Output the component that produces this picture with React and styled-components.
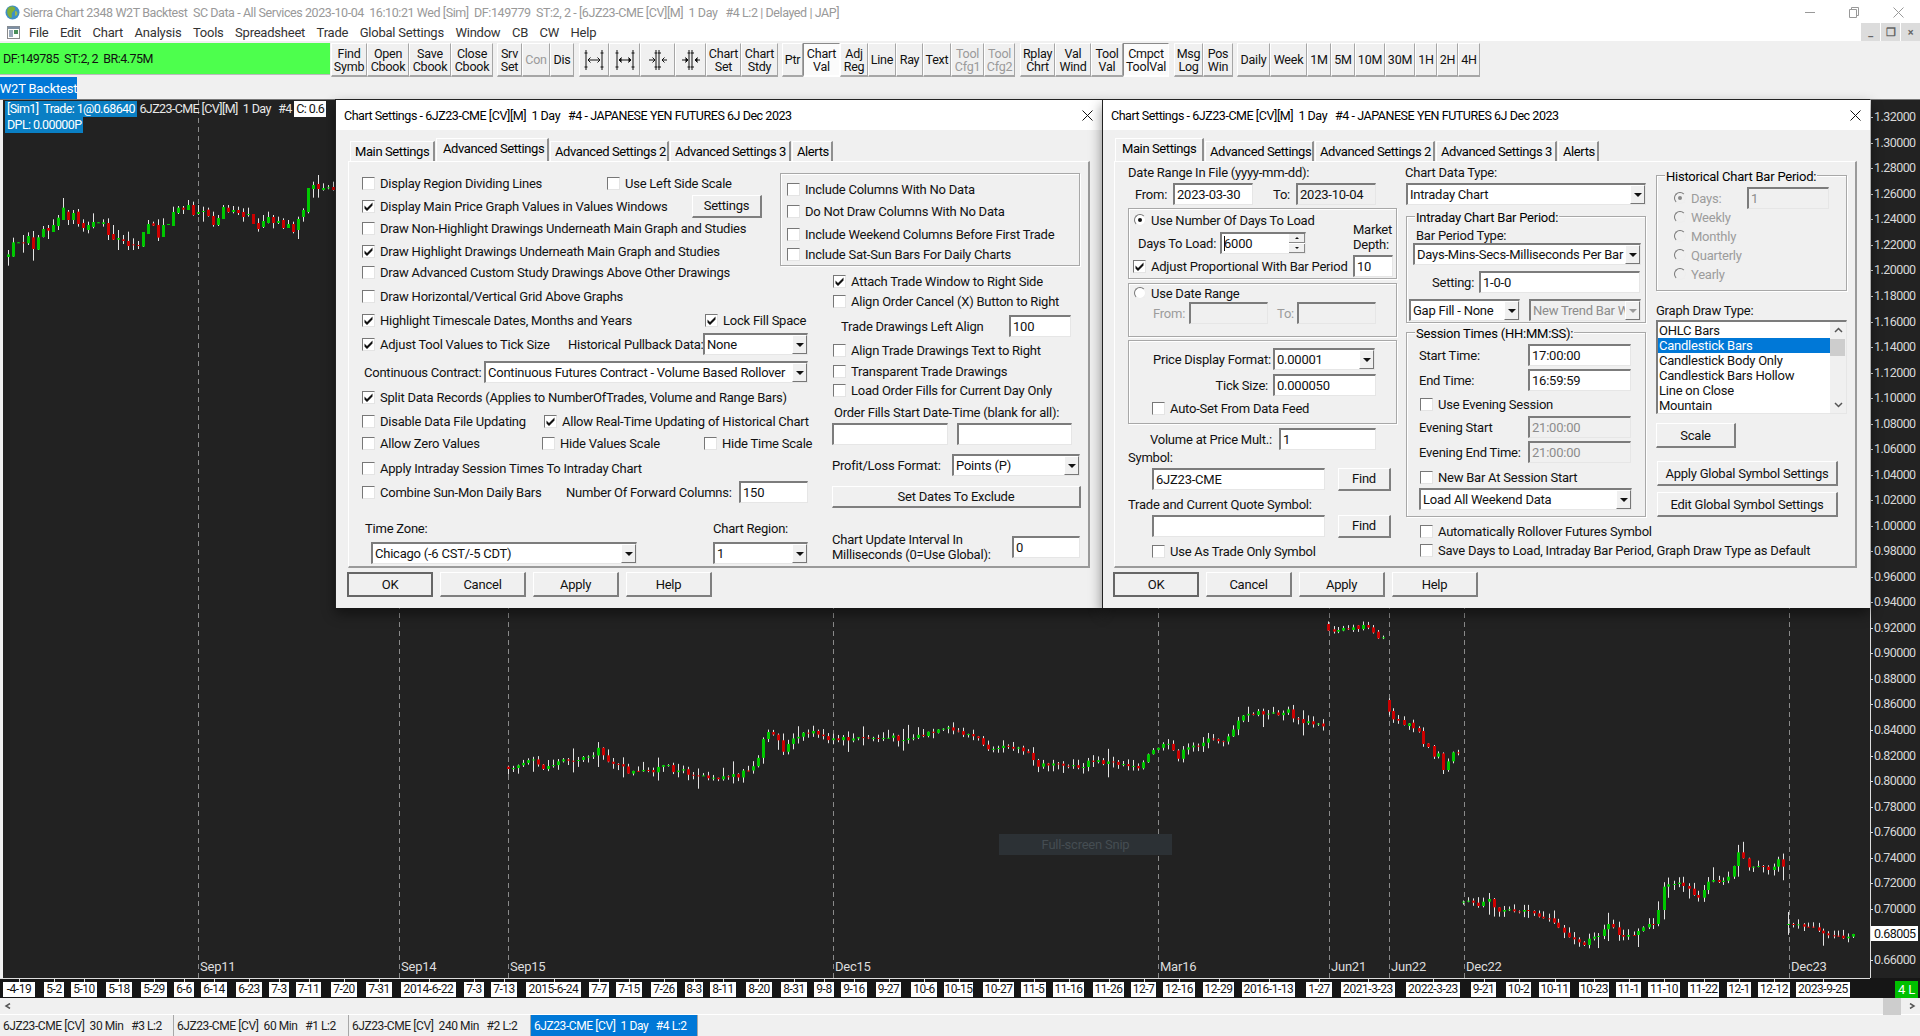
import React from 'react';
import styled, { createGlobalStyle } from 'styled-components';

const FONT = `Roboto, "Liberation Sans", sans-serif`;

const GlobalStyle = createGlobalStyle`
  html, body { margin: 0; padding: 0; background: #f0f0f0; }
  body { font-family: ${FONT}; font-size: 13px; letter-spacing: -0.23px; color: #000; overflow: hidden; }
  * { box-sizing: border-box; }
`;

/* ---------- shell ---------- */

const Shell = styled.div`
  width: 1920px;
  height: 1036px;
  display: flex;
  flex-direction: column;
  overflow: hidden;
  background: #f0f0f0;
`;

const TitleBar = styled.div`
  height: 24px;
  background: #fff;
  display: flex;
  align-items: center;
  padding-left: 5px;
  color: #999;
  white-space: pre;
`;

const TitleText = styled.span`
  margin-left: 3px;
  flex: 1;
  font-size: 12.5px;
  letter-spacing: -0.42px;
`;

const WinBtn = styled.span`
  width: 44px;
  display: flex;
  justify-content: center;
  align-items: center;
`;

const MenuBar = styled.div`
  height: 17px;
  background: #fff;
  display: flex;
  align-items: center;
  padding-left: 7px;
  color: #333;
`;

const MenuItem = styled.span`
  margin-right: 11.5px;
`;

const MdiButtons = styled.div`
  margin-left: auto;
  display: flex;
  gap: 1px;
  align-self: flex-end;
  height: 18px;
`;

const MdiBtn = styled.span`
  width: 19px;
  background: #dcdcdc;
  color: #666;
  font-size: 11px;
  font-weight: 700;
  display: flex;
  align-items: center;
  justify-content: center;
`;

const ToolBar = styled.div`
  height: 36px;
  padding-top: 2px;
  display: flex;
`;

const StatusBox = styled.div`
  width: 330px;
  height: 32px;
  background: #4dff4d;
  display: flex;
  align-items: center;
  padding-left: 3px;
  white-space: pre;
  color: #111;
  font-size: 12.5px;
  letter-spacing: -0.5px;
  border-bottom: 1px solid #bbb;
`;

const TbGroup = styled.div`
  display: flex;
  margin-left: ${(p) => p.$ml}px;
`;

const TbBtn = styled.div`
  width: ${(p) => p.$w}px;
  height: 34px;
  display: flex;
  align-items: center;
  justify-content: center;
  text-align: center;
  line-height: 13px;
  font-size: 12.5px;
  white-space: pre;
  color: ${(p) => (p.$dis ? '#9a9a9a' : '#111')};
  background: ${(p) => (p.$pressed ? '#fbfbfb' : '#f0f0f0')};
  border-top: ${(p) => (p.$pressed ? '1px solid #8a8a8a' : '1px solid #fff')};
  border-left: ${(p) => (p.$pressed ? '1px solid #8a8a8a' : '1px solid #fff')};
  border-right: 1px solid ${(p) => (p.$pressed ? '#fff' : '#a6a6a6')};
  border-bottom: 2px solid ${(p) => (p.$pressed ? '#fff' : '#a6a6a6')};
`;

const TabRow = styled.div`
  height: 23px;
  display: flex;
  border-bottom: 1px solid #777;
`;

const WindowTab = styled.div`
  width: 77px;
  background: #0078d7;
  color: #fff;
  display: flex;
  align-items: center;
  justify-content: center;
  white-space: nowrap;
`;

/* ---------- chart ---------- */

const Workspace = styled.div`
  position: relative;
  height: 898px;
  background: #222;
  border-left: 3px solid #f0f0f0;
`;

const ChartSvg = styled.svg`
  display: block;
  margin-left: -3px;
`;

const TimeScale = styled.div`
  position: relative;
  height: 20px;
  margin-left: -3px;
  background: #161616;
`;

const TimeLabel = styled.span`
  position: absolute;
  top: 4px;
  height: 15px;
  background: #fff;
  color: #111;
  font-size: 12px;
  letter-spacing: -0.45px;
  line-height: 15px;
  text-align: center;
  white-space: nowrap;
`;

const TimeTick = styled.span`
  position: absolute;
  top: 0;
  width: 1px;
  height: 4px;
  background: #ddd;
`;

const TimeBadge = styled.span`
  position: absolute;
  left: 1895px;
  top: 3px;
  width: 23px;
  height: 17px;
  background: #00c000;
  color: #fff;
  text-align: center;
  line-height: 17px;
`;

const PriceLabel = styled.span`
  position: absolute;
  left: 1871px;
  font-size: 12.5px;
  letter-spacing: -0.55px;
  line-height: 15px;
  height: 15px;
  padding: 0 2px 0 3px;
  background: ${(p) => (p.$now ? '#fff' : 'transparent')};
  color: ${(p) => (p.$now ? '#111' : '#d8d8d8')};
`;

const DateLabel = styled.span`
  position: absolute;
  top: 859px;
  color: #ddd;
`;

const ChartHeader = styled.div`
  position: absolute;
  left: 2px;
  top: 1px;
  color: #e8e8e8;
  font-size: 12.5px;
  letter-spacing: -0.6px;
  line-height: 16px;
`;

const HeaderRow = styled.div`
  display: flex;
  white-space: pre;
`;

const Tag = styled.span`
  background: ${(p) => p.$bg};
  color: ${(p) => p.$fg};
  padding: 0 2px;
`;

const Snip = styled.div`
  position: absolute;
  left: 996px;
  top: 734px;
  width: 173px;
  height: 21px;
  background: #2c3135;
  color: #454d52;
  text-align: center;
  line-height: 21px;
`;

/* ---------- dialogs ---------- */

const Dialog = styled.div`
  position: absolute;
  top: -1px;
  left: ${(p) => p.$left}px;
  width: ${(p) => p.$w}px;
  height: 509px;
  background: #f0f0f0;
  border-top: 1px solid #222;
  border-left: 1px solid #222;
  box-shadow: 0 6px 12px rgba(0, 0, 0, 0.45);
`;

const DialogTitle = styled.div`
  height: 30px;
  background: #fff;
  display: flex;
  align-items: center;
  padding: 0 9px 0 8px;
  white-space: pre;
  font-size: 12.5px;
  letter-spacing: -0.45px;
`;

const CloseX = styled.svg`
  margin-left: auto;
`;

const TabStrip = styled.div`
  height: 22px;
  margin-top: 9px;
  padding-left: ${(p) => p.$pl}px;
  display: flex;
  align-items: flex-end;
`;

const Tab = styled.div`
  width: ${(p) => p.$w}px;
  height: ${(p) => (p.$on ? 23 : 20)}px;
  margin-right: 1px;
  padding-left: ${(p) => (p.$on ? 6 : 4)}px;
  padding-bottom: ${(p) => (p.$on ? 3 : 0)}px;
  display: flex;
  align-items: center;
  white-space: nowrap;
  letter-spacing: -0.4px;
  background: #f0f0f0;
  border-top: 1px solid #fff;
  border-left: 1px solid #fff;
  border-right: 2px solid #8f8f8f;
  position: relative;
  z-index: ${(p) => (p.$on ? 2 : 0)};
`;

const Page = styled.div`
  display: flex;
  margin-left: ${(p) => p.$ml}px;
  width: ${(p) => p.$w}px;
  height: 407px;
  border-top: 1px solid #fff;
  border-left: 1px solid #fff;
  border-right: 2px solid #9a9a9a;
  border-bottom: 2px solid #9a9a9a;
`;

const Column = styled.div`
  flex: none;
  width: ${(p) => p.$w}px;
`;

const Row = styled.div`
  height: 16px;
  margin-top: ${(p) => p.$t - 16}px;
  padding-left: ${(p) => p.$x || 0}px;
  display: flex;
  align-items: center;
  white-space: nowrap;
`;

const Text = styled.span`
  flex: none;
  width: ${(p) => (p.$w ? `${p.$w}px` : 'auto')};
  margin-left: ${(p) => p.$ml || 0}px;
  margin-bottom: ${(p) => p.$up || 0}px;
  padding-right: ${(p) => (p.$right ? 5 : 0)}px;
  text-align: ${(p) => (p.$right ? 'right' : 'left')};
  color: ${(p) => (p.$dis ? '#9c9c9c' : '#111')};
  line-height: 15px;
  white-space: pre;
`;

const Option = styled.span`
  flex: none;
  display: inline-flex;
  align-items: center;
  width: ${(p) => (p.$w ? `${p.$w}px` : 'auto')};
  color: ${(p) => (p.$dis ? '#9c9c9c' : '#111')};
`;

const CheckBox = styled.span`
  flex: none;
  width: 13px;
  height: 13px;
  margin-right: 5px;
  background: #fff;
  border-top: 1px solid #777;
  border-left: 1px solid #777;
  border-right: 1px solid #e4e4e4;
  border-bottom: 1px solid #e4e4e4;
  display: inline-flex;
  align-items: center;
  justify-content: center;
`;

const Radio = styled.span`
  flex: none;
  width: 12px;
  height: 12px;
  margin-right: 5px;
  border-radius: 50%;
  background: ${(p) => (p.$dis ? '#f0f0f0' : '#fff')};
  border: 1px solid;
  border-color: #777 #eee #eee #777;
  display: inline-flex;
  align-items: center;
  justify-content: center;
  &::after {
    content: '';
    display: ${(p) => (p.$on ? 'block' : 'none')};
    width: 4px;
    height: 4px;
    border-radius: 50%;
    background: ${(p) => (p.$dis ? '#888' : '#111')};
  }
`;

const Field = styled.div`
  flex: none;
  position: relative;
  width: ${(p) => p.$w}px;
  height: 22px;
  margin-left: ${(p) => p.$ml || 0}px;
  padding: 0 2px;
  display: flex;
  align-items: center;
  background: ${(p) => (p.$dis || p.$ro ? '#f0f0f0' : '#fff')};
  color: ${(p) => (p.$dis ? '#8c8c8c' : '#111')};
  border-top: 2px solid #7c7c7c;
  border-left: 2px solid #7c7c7c;
  border-right: 1px solid #e6e6e6;
  border-bottom: 1px solid #e6e6e6;
  overflow: hidden;
`;

const DropBtn = styled.span`
  position: absolute;
  right: 0;
  top: 0;
  bottom: 0;
  width: 15px;
  background: #f0f0f0;
  border-right: 1px solid #777;
  border-bottom: 1px solid #777;
  border-top: 1px solid #fff;
  border-left: 1px solid #fff;
  display: flex;
  align-items: center;
  justify-content: center;
  &::after {
    content: '';
    border-left: 4px solid transparent;
    border-right: 4px solid transparent;
    border-top: 4px solid ${(p) => (p.$dis ? '#999' : '#111')};
  }
`;

const SpinBox = styled.span`
  position: absolute;
  right: 0;
  top: 0;
  bottom: 0;
  width: 16px;
  display: flex;
  flex-direction: column;
  gap: 1px;
  background: #fff;
`;

const SpinBtn = styled.span`
  flex: 1;
  background: #f0f0f0;
  border-right: 1px solid #888;
  border-bottom: 1px solid #888;
  display: flex;
  align-items: center;
  justify-content: center;
  &::after {
    content: '';
    border-left: 2px solid transparent;
    border-right: 2px solid transparent;
    border-${(p) => (p.$up ? 'bottom' : 'top')}: 2px solid #111;
  }
`;

const Caret = styled.i`
  display: inline-block;
  width: 1px;
  height: 15px;
  margin-right: -1px;
  background: #111;
`;

const Btn = styled.div`
  flex: none;
  width: ${(p) => p.$w}px;
  height: ${(p) => p.$h || 25}px;
  margin-left: ${(p) => p.$ml || 0}px;
  margin-top: ${(p) => p.$mt || 0}px;
  display: flex;
  align-items: center;
  justify-content: center;
  color: #111;
  background: #f0f0f0;
  border-top: 1px solid #fff;
  border-left: 1px solid #fff;
  border-right: 2px solid #7f7f7f;
  border-bottom: 2px solid #7f7f7f;
  ${(p) => p.$main && 'border: 2px solid #666; border-right-width: 2px;'}
`;

const ButtonRow = styled.div`
  display: flex;
  gap: 7px;
  margin: 4px 0 0 ${(p) => p.$ml}px;
`;

const Group = styled.div`
  position: relative;
  width: ${(p) => p.$w}px;
  height: ${(p) => p.$h}px;
  margin-top: ${(p) => p.$mt}px;
  margin-left: ${(p) => p.$ml || 0}px;
  border: 1px solid #a8a8a8;
  box-shadow: inset 1px 1px 0 #fff, 1px 1px 0 #fff;
`;

const Legend = styled.span`
  position: absolute;
  left: 8px;
  top: -7px;
  padding: 0 1px;
  background: #f0f0f0;
  line-height: 15px;
`;

const ListBox = styled.div`
  display: flex;
  width: 191px;
  height: 94px;
  margin-top: 2px;
  background: #fff;
  border-top: 2px solid #7c7c7c;
  border-left: 2px solid #7c7c7c;
  border-right: 1px solid #e6e6e6;
  border-bottom: 1px solid #e6e6e6;
`;

const ListItems = styled.div`
  flex: 1;
  padding-top: 1px;
`;

const ListItem = styled.div`
  height: 15px;
  line-height: 15px;
  padding-left: 1px;
  background: ${(p) => (p.$on ? '#0078d7' : 'transparent')};
  color: ${(p) => (p.$on ? '#fff' : '#111')};
`;

const ListScroll = styled.div`
  position: relative;
  width: 16px;
  background: #f0f0f0;
  display: flex;
  flex-direction: column;
  justify-content: space-between;
  align-items: center;
  padding: 5px 0;
`;

const ListThumb = styled.span`
  position: absolute;
  left: 0;
  top: 17px;
  width: 15px;
  height: 17px;
  background: #cdcdcd;
`;

/* ---------- bottom ---------- */

const ScrollBar = styled.div`
  height: 17px;
  display: flex;
  align-items: center;
  padding: 0 4px 0 4px;
  border-bottom: 1px solid #fff;
`;

const ScrollThumb = styled.span`
  width: 18px;
  height: 17px;
  margin-left: auto;
  margin-right: 6px;
  background: #cdcdcd;
`;

const BottomTabs = styled.div`
  flex: 1;
  display: flex;
`;

const BottomTab = styled.div`
  width: ${(p) => p.$w}px;
  padding-left: 3px;
  display: flex;
  align-items: center;
  white-space: pre;
  font-size: 12px;
  letter-spacing: -0.42px;
  background: ${(p) => (p.$on ? '#0078d7' : 'transparent')};
  color: ${(p) => (p.$on ? '#fff' : '#222')};
  border-right: 1px solid #a8a8a8;
`;

/* ---------- data ---------- */

const PRICE_Y = (i) => 117.3 + i * 25.53;
const PRICES = Array.from({ length: 34 }, (_, i) => (1.32 - i * 0.02).toFixed(5));

const TIME_LABELS = [
  [3, 35, '-4-19'], [44, 64, '5-2'], [71, 97, '5-10'], [106, 132, '5-18'], [141, 167, '5-29'],
  [174, 194, '6-6'], [201, 227, '6-14'], [236, 262, '6-23'], [269, 289, '7-3'], [296, 321, '7-11'],
  [331, 357, '7-20'], [366, 392, '7-31'], [401, 456, '2014-6-22'], [464, 484, '7-3'], [491, 517, '7-13'],
  [526, 581, '2015-6-24'], [589, 609, '7-7'], [616, 642, '7-15'], [651, 677, '7-26'], [685, 703, '8-3'],
  [710, 736, '8-11'], [746, 772, '8-20'], [781, 807, '8-31'], [814, 834, '9-8'], [841, 867, '9-16'],
  [876, 901, '9-27'], [911, 937, '10-6'], [944, 973, '10-15'], [983, 1014, '10-27'], [1021, 1046, '11-5'],
  [1053, 1084, '11-16'], [1093, 1124, '11-26'], [1131, 1156, '12-7'], [1163, 1195, '12-16'], [1203, 1234, '12-29'],
  [1242, 1295, '2016-1-13'], [1306, 1332, '1-27'], [1341, 1395, '2021-3-23'], [1406, 1460, '2022-3-23'],
  [1471, 1496, '9-21'], [1506, 1531, '10-2'], [1539, 1570, '10-11'], [1579, 1609, '10-23'], [1616, 1641, '11-1'],
  [1648, 1680, '11-10'], [1688, 1719, '11-22'], [1727, 1751, '12-1'], [1758, 1790, '12-12'], [1796, 1850, '2023-9-25'],
];

const DIVIDERS = [
  [198, 'Sep11'], [399, 'Sep14'], [508, 'Sep15'], [833, 'Dec15'], [1158, 'Mar16'],
  [1329, 'Jun21'], [1389, 'Jun22'], [1464, 'Dec22'], [1789, 'Dec23'],
];

// top, bottom, high, low, colour, read off the left part of the chart
const LEFT_BARS = [
  [463,471,450,497,'g'],[427,470,413,470,'g'],[427,428,427,428,'g'],[427,428,405,458,'r'],[408,430,397,435,'g'],
  [412,447,393,482,'r'],[412,449,405,450,'g'],[387,411,378,412,'g'],[384,392,375,417,'r'],[375,396,358,396,'g'],
  [353,378,345,390,'g'],[323,360,294,360,'g'],[335,360,330,375,'r'],[339,360,330,372,'g'],[335,372,327,380,'r'],
  [369,384,358,395,'r'],[375,390,365,400,'g'],[366,381,340,385,'g'],[367,368,367,368,'g'],[367,372,358,380,'g'],
  [369,405,355,420,'r'],[402,419,375,420,'r'],[414,419,390,450,'g'],[418,423,405,432,'r'],[423,438,395,450,'r'],
  [433,435,415,450,'r'],[435,436,423,447,'r'],[396,440,396,441,'g'],[372,402,360,402,'g'],[370,377,365,378,'r'],
  [375,413,358,423,'r'],[375,411,355,411,'g'],[372,374,372,374,'g'],[336,378,320,378,'g'],[323,339,318,342,'g'],
  [323,329,318,342,'r'],[315,330,300,330,'g'],[315,345,305,347,'r'],[336,342,315,345,'g'],[333,335,320,365,'g'],
  [329,348,323,350,'r'],[348,375,335,380,'r'],[354,375,345,378,'g'],[321,357,315,357,'g'],[323,336,315,338,'r'],
  [330,336,318,340,'g'],[330,339,320,345,'r'],[336,351,325,365,'r'],[342,345,323,350,'g'],[342,372,342,372,'r'],
  [369,387,355,395,'r'],[363,381,345,384,'g'],[351,369,335,370,'g'],[351,369,345,385,'r'],[363,369,350,372,'g'],
  [360,384,355,387,'r'],[372,384,360,384,'g'],[372,396,365,400,'r'],[357,390,350,417,'g'],[330,351,325,365,'g'],
  [264,336,264,340,'g'],[255,267,245,293,'g'],[252,267,225,293,'r'],[264,270,250,272,'g'],[262,265,255,268,'g'],
  [261,270,245,272,'r'],
];

const MID_PATH = [
  [46,380],[85,365],[105,385],[135,360],[170,355],[192,330],[210,360],[240,395],[260,400],[300,380],[330,395],
  [390,412],[420,405],[445,385],[455,360],[463,295],[478,275],[495,330],[512,300],[535,280],[550,275],[565,305],
  [600,298],[640,295],[700,295],[765,270],[800,285],[830,320],[860,312],[885,330],[903,360],[912,380],[945,362],
  [970,385],[1000,365],[1050,372],[1080,378],[1090,350],[1108,320],[1125,320],[1140,350],[1150,335],[1180,305],
  [1215,300],[1228,270],[1250,225],[1265,220],[1290,225],[1320,215],[1335,245],[1378,258],
];

const JUN21 = [[72,72,92,'r'],[85,88,95,'r'],[97,90,95,'g'],[110,84,92,'g'],[122,85,87,'r'],[135,82,90,'g'],[148,76,87,'r'],[160,75,87,'g'],[173,75,83,'r'],[185,82,98,'r'],[198,95,115,'r'],[211,112,113,'g']];
const JUN22 = [[224,300,335,'r'],[236,333,358,'r'],[249,357,362,'r'],[262,360,375,'r'],[275,370,378,'g'],[287,368,385,'r'],[300,384,395,'r'],[312,393,432,'r'],[325,430,441,'r'],[338,438,470,'r'],[350,460,470,'g'],[363,460,510,'r'],[375,484,510,'g'],[388,457,484,'g'],[401,457,460,'r']];
const DEC22 = [[413,905],[425,902],[438,908],[451,918],[464,905],[477,897],[490,922],[503,935],[515,930],[528,928],[541,934],[553,935],[566,930],[578,933],[591,940],[604,950],[616,955],[629,955],[642,968],[654,983],[667,998],[680,1012],[692,1018],[705,1027],[718,1035],[730,1016],[743,1010],[755,1008],[768,988],[780,972],[793,982],[806,1005],[818,1010],[831,1005],[844,1005],[856,993],[869,982],[882,972],[894,972],[907,930],[920,860],[932,853],[945,852],[958,848],[970,858],[983,866],[996,885],[1008,893],[1021,870],[1033,845],[1046,840],[1059,846],[1071,842],[1084,830],[1097,798],[1109,757],[1122,775],[1135,802],[1147,800],[1160,798],[1172,800],[1185,810],[1198,800],[1210,778],[1223,800]];
const DEC23 = [[1235,972],[1248,974],[1261,973],[1274,980],[1286,980],[1299,982],[1312,992],[1324,1000],[1337,1006],[1350,1007],[1362,1007],[1375,1015],[1387,1010],[1400,1002]];

const buildBars = () => {
  let seed = 17;
  const rnd = () => {
    seed = (seed * 9301 + 49297) % 233280;
    return seed / 233280;
  };
  const bars = [];
  const push = (x, top, bot, col, wick = 3) => {
    const hi = top - rnd() * wick * 2;
    const lo = bot + rnd() * wick * 2;
    bars.push({ x, top, bot: Math.max(bot, top + 1), hi, lo, col });
  };

  LEFT_BARS.forEach(([t, b, h, l, c], i) => {
    bars.push({ x: 8 + i * 5, top: 100 + t / 3, bot: 100 + b / 3, hi: 100 + h / 3, lo: 100 + l / 3, col: c });
  });

  const at = (x) => {
    for (let i = 1; i < MID_PATH.length; i++) {
      if (x <= MID_PATH[i][0]) {
        const [x0, y0] = MID_PATH[i - 1];
        const [x1, y1] = MID_PATH[i];
        return y0 + ((y1 - y0) * (x - x0)) / (x1 - x0);
      }
    }
    return MID_PATH[MID_PATH.length - 1][1];
  };
  let prev = 640 + at(46) / 3;
  for (let x = 508; x <= 1324; x += 5) {
    const y = 640 + at(46 + (x - 508) * 1.633) / 3 + (rnd() - 0.5) * 6;
    push(x, Math.min(prev, y), Math.max(prev, y), y < prev ? 'g' : 'r', rnd() > 0.85 ? 7 : 3);
    prev = y;
  }

  const rx = (x) => 1300 + x / 2.53;
  const ry = (y) => 600 + y / 3;
  [...JUN21, ...JUN22].forEach(([x, t, b, c]) => push(rx(x), ry(t), ry(b), c, 2));
  [DEC22, DEC23].forEach((seg) => {
    let last = seg[0][1] + 3;
    seg.forEach(([x, y]) => {
      push(rx(x), ry(Math.min(last, y)), ry(Math.max(last, y)), y < last ? 'g' : 'r', rnd() > 0.8 ? 7 : 3);
      last = y;
    });
  });
  return bars;
};

const BARS = buildBars();

const TOOLBAR = [
  { ml: 1, items: [['Find\nSymb', 36], ['Open\nCbook', 42], ['Save\nCbook', 42], ['Close\nCbook', 42]] },
  { ml: 4, items: [['Srv\nSet', 25], ['Con', 28, 'dis'], ['Dis', 24]] },
  { ml: 5, items: [['i1', 30], ['i2', 31], ['i3', 35], ['i4', 31], ['Chart\nSet', 35], ['Chart\nStdy', 37]] },
  { ml: 4, items: [['Ptr', 21], ['Chart\nVal', 37, 'on'], ['Adj\nReg', 28], ['Line', 28], ['Ray', 27], ['Text', 28], ['Tool\nCfg1', 33, 'dis'], ['Tool\nCfg2', 31, 'dis']] },
  { ml: 5, items: [['Rplay\nChrt', 35], ['Val\nWind', 36], ['Tool\nVal', 32], ['Cmpct\nToolVal', 46, 'on']] },
  { ml: 5, items: [['Msg\nLog', 29], ['Pos\nWin', 30]] },
  { ml: 4, items: [['Daily', 33], ['Week', 37], ['1M', 24], ['5M', 24], ['10M', 30], ['30M', 30], ['1H', 22], ['2H', 21], ['4H', 22]] },
];

const TABS = ['Main Settings', 'Advanced Settings', 'Advanced Settings 2', 'Advanced Settings 3', 'Alerts'];

/* ---------- small parts ---------- */

const Globe = () => (
  <svg width="15" height="15" viewBox="0 0 15 15">
    <circle cx="7.5" cy="7.5" r="7" fill="#3f8fc4" />
    <path d="M3 3c2-2 6-2 7 0 1 2-2 3-3 5s1 4-1 5C3 12 1 7 3 3z" fill="#7fae3a" />
    <path d="M10 6c2 0 3 2 2 4l-2 1z" fill="#9bb94a" />
  </svg>
);

const MenuIcon = () => (
  <svg width="13" height="13" viewBox="0 0 13 13" style={{ marginRight: 9 }}>
    <rect x="0.5" y="0.5" width="12" height="12" fill="#fff" stroke="#8a8a8a" />
    <rect x="0.5" y="0.5" width="12" height="2.5" fill="#7e8fa3" />
    <rect x="2" y="4" width="4" height="7" fill="#9ab" />
    <rect x="7" y="4" width="4" height="4" fill="#4a8f5a" />
  </svg>
);

const Bracket = ({ type }) => {
  const bold = type === 'i2' || type === 'i4';
  const inward = type === 'i3' || type === 'i4';
  const head = bold ? 'currentColor' : 'none';
  return (
    <svg width="20" height="24" viewBox="0 0 20 24" stroke="#111" fill="none" color="#111">
      {inward ? (
        <>
          <path d="M8 2v20M11 2v20M6.5 5h3M6.5 19h3M10 5h3M10 19h3" />
          <path d="M1 12h6M14 12h5" />
          <path d="M4.5 9.5L7 12l-2.5 2.5" fill={head} />
          <path d="M16.5 9.5L14 12l2.5 2.5" fill={head} />
        </>
      ) : (
        <>
          <path d="M2 2v20M18 2v20M0.5 5h3M0.5 19h3M16.5 5h3M16.5 19h3" />
          <path d="M4 12h12" />
          <path d="M6.5 9.5L4 12l2.5 2.5" fill={head} />
          <path d="M13.5 9.5L16 12l-2.5 2.5" fill={head} />
        </>
      )}
    </svg>
  );
};

const Chevron = ({ d }) => (
  <svg width="9" height="6" viewBox="0 0 9 6" fill="none" stroke="#555" strokeWidth="1.5">
    <path d={d} />
  </svg>
);

const Opt = ({ on, w, children }) => (
  <Option $w={w}>
    <CheckBox>
      {on && (
        <svg width="9" height="9" viewBox="0 0 9 9">
          <path d="M0.5 3.5l2.5 2.5L8.5 0.5v3L3 9 0.5 6.5z" fill="#111" />
        </svg>
      )}
    </CheckBox>
    {children}
  </Option>
);

const Rad = ({ on, dis, w, children }) => (
  <Option $w={w} $dis={dis}>
    <Radio $on={on} $dis={dis} />
    {children}
  </Option>
);

const Select = ({ w, ml, dis, children }) => (
  <Field $w={w} $ml={ml} $dis={dis}>
    {children}
    <DropBtn $dis={dis} />
  </Field>
);

const CloseIcon = () => (
  <CloseX width="11" height="11" viewBox="0 0 11 11" stroke="#111">
    <path d="M0.5 0.5l10 10M10.5 0.5l-10 10" />
  </CloseX>
);

const DialogFrame = ({ left, width, active, tabWidths, tabPl, pageMl, pageW, children }) => (
  <Dialog $left={left} $w={width}>
    <DialogTitle>
      Chart Settings - 6JZ23-CME [CV][M]  1 Day   #4 - JAPANESE YEN FUTURES 6J Dec 2023
      <CloseIcon />
    </DialogTitle>
    <TabStrip $pl={tabPl}>
      {TABS.map((t, i) => (
        <Tab key={t} $w={tabWidths[i]} $on={i === active}>{t}</Tab>
      ))}
    </TabStrip>
    <Page $ml={pageMl} $w={pageW}>{children}</Page>
    <ButtonRow $ml={pageMl - 1}>
      <Btn $w={86} $main>OK</Btn>
      <Btn $w={86}>Cancel</Btn>
      <Btn $w={86}>Apply</Btn>
      <Btn $w={86}>Help</Btn>
    </ButtonRow>
  </Dialog>
);

/* ---------- dialog pages ---------- */

const AdvancedPage = () => (
  <>
    <Column $w={431}>
      <Row $t={29} $x={13}><Opt w={245}>Display Region Dividing Lines</Opt><Opt>Use Left Side Scale</Opt></Row>
      <Row $t={23} $x={13}><Opt on w={330}>Display Main Price Graph Values in Values Windows</Opt><Btn $w={70} $h={23}>Settings</Btn></Row>
      <Row $t={22} $x={13}><Opt>Draw Non-Highlight Drawings Underneath Main Graph and Studies</Opt></Row>
      <Row $t={23} $x={13}><Opt on>Draw Highlight Drawings Underneath Main Graph and Studies</Opt></Row>
      <Row $t={21} $x={13}><Opt>Draw Advanced Custom Study Drawings Above Other Drawings</Opt></Row>
      <Row $t={24} $x={13}><Opt>Draw Horizontal/Vertical Grid Above Graphs</Opt></Row>
      <Row $t={24} $x={13}><Opt on w={343}>Highlight Timescale Dates, Months and Years</Opt><Opt on>Lock Fill Space</Opt></Row>
      <Row $t={24} $x={13}><Opt on w={206}>Adjust Tool Values to Tick Size</Opt><Text $w={135}>Historical Pullback Data:</Text><Select w={105}>None</Select></Row>
      <Row $t={28} $x={15}><Text $w={120}>Continuous Contract:</Text><Select w={324}>Continuous Futures Contract - Volume Based Rollover</Select></Row>
      <Row $t={25} $x={13}><Opt on>Split Data Records (Applies to NumberOfTrades, Volume and Range Bars)</Opt></Row>
      <Row $t={24} $x={13}><Opt w={182}>Disable Data File Updating</Opt><Opt on>Allow Real-Time Updating of Historical Chart</Opt></Row>
      <Row $t={22} $x={13}><Opt w={180}>Allow Zero Values</Opt><Opt w={162}>Hide Values Scale</Opt><Opt>Hide Time Scale</Opt></Row>
      <Row $t={25} $x={13}><Opt>Apply Intraday Session Times To Intraday Chart</Opt></Row>
      <Row $t={24} $x={13}><Opt w={204}>Combine Sun-Mon Daily Bars</Opt><Text $w={173}>Number Of Forward Columns:</Text><Field $w={69}>150</Field></Row>
      <Row $t={36} $x={16}><Text $w={348}>Time Zone:</Text><Text>Chart Region:</Text></Row>
      <Row $t={25} $x={22}><Select w={266}>Chicago (-6 CST/-5 CDT)</Select><Select w={95} ml={76}>1</Select></Row>
    </Column>
    <Column $w={300}>
      <Group $w={300} $h={93} $mt={11}>
        <Row $t={23} $x={6}><Opt>Include Columns With No Data</Opt></Row>
        <Row $t={22} $x={6}><Opt>Do Not Draw Columns With No Data</Opt></Row>
        <Row $t={23} $x={6}><Opt>Include Weekend Columns Before First Trade</Opt></Row>
        <Row $t={20} $x={6}><Opt>Include Sat-Sun Bars For Daily Charts</Opt></Row>
      </Group>
      <Row $t={23} $x={53}><Opt on>Attach Trade Window to Right Side</Opt></Row>
      <Row $t={20} $x={53}><Opt>Align Order Cancel (X) Button to Right</Opt></Row>
      <Row $t={25} $x={61}><Text $w={168}>Trade Drawings Left Align</Text><Field $w={62}>100</Field></Row>
      <Row $t={24} $x={53}><Opt>Align Trade Drawings Text to Right</Opt></Row>
      <Row $t={21} $x={53}><Opt>Transparent Trade Drawings</Opt></Row>
      <Row $t={19} $x={53}><Opt>Load Order Fills for Current Day Only</Opt></Row>
      <Row $t={22} $x={54}><Text>Order Fills Start Date-Time (blank for all):</Text></Row>
      <Row $t={22} $x={52}><Field $w={116} /><Field $w={115} $ml={9} /></Row>
      <Row $t={31} $x={52}><Text $w={120}>Profit/Loss Format:</Text><Select w={128}>Points (P)</Select></Row>
      <Row $t={32} $x={52}><Btn $w={249} $h={22}>Set Dates To Exclude</Btn></Row>
      <Row $t={50} $x={52}><Text $w={180}>Chart Update Interval In{'\n'}Milliseconds (0=Use Global):</Text><Field $w={68}>0</Field></Row>
    </Column>
  </>
);

const MainPage = () => (
  <>
    <Column $w={290}>
      <Row $t={18} $x={13}><Text>Date Range In File (yyyy-mm-dd):</Text></Row>
      <Row $t={22} $x={20}><Text $w={38}>From:</Text><Field $w={80}>2023-03-30</Field><Text $w={23} $ml={20}>To:</Text><Field $w={80} $ro>2023-10-04</Field></Row>
      <Group $w={269} $h={71} $mt={6} $ml={13}>
        <Row $t={19} $x={5}><Rad on>Use Number Of Days To Load</Rad></Row>
        <Row $t={23} $x={9}><Text $w={82}>Days To Load:</Text><Field $w={86}><Caret />6000<SpinBox><SpinBtn $up /><SpinBtn /></SpinBox></Field><Text $ml={47} $up={13}>Market{'\n'}Depth:</Text></Row>
        <Row $t={23} $x={4}><Opt on w={220}>Adjust Proportional With Bar Period</Opt><Field $w={40}>10</Field></Row>
      </Group>
      <Group $w={269} $h={54} $mt={4} $ml={13}>
        <Row $t={17} $x={5}><Rad>Use Date Range</Rad></Row>
        <Row $t={20} $x={24}><Text $w={36} $dis>From:</Text><Field $w={79} $dis /><Text $w={20} $ml={9} $dis>To:</Text><Field $w={79} $dis /></Row>
      </Group>
      <Group $w={269} $h={84} $mt={3} $ml={13}>
        <Row $t={26} $x={24}><Text $w={120} $right>Price Display Format:</Text><Select w={102}>0.00001</Select></Row>
        <Row $t={26} $x={24}><Text $w={120} $right>Tick Size:</Text><Field $w={103}>0.000050</Field></Row>
        <Row $t={23} $x={23}><Opt>Auto-Set From Data Feed</Opt></Row>
      </Group>
      <Row $t={23} $x={35}><Text $w={129}>Volume at Price Mult.:</Text><Field $w={97}>1</Field></Row>
      <Row $t={18} $x={13}><Text>Symbol:</Text></Row>
      <Row $t={22} $x={37}><Field $w={173}>6JZ23-CME</Field><Btn $w={53} $h={23} $ml={13}>Find</Btn></Row>
      <Row $t={25} $x={13}><Text>Trade and Current Quote Symbol:</Text></Row>
      <Row $t={22} $x={37}><Field $w={173} /><Btn $w={53} $h={23} $ml={13}>Find</Btn></Row>
      <Row $t={25} $x={37}><Opt>Use As Trade Only Symbol</Opt></Row>
    </Column>
    <Column $w={251}>
      <Row $t={18}><Text>Chart Data Type:</Text></Row>
      <Row $t={22} $x={1}><Select w={240}>Intraday Chart</Select></Row>
      <Group $w={240} $h={107} $mt={14} $ml={1}>
        <Legend>Intraday Chart Bar Period:</Legend>
        <Row $t={26} $x={9}><Text>Bar Period Type:</Text></Row>
        <Row $t={19} $x={6}><Select w={228}>Days-Mins-Secs-Milliseconds Per Bar</Select></Row>
        <Row $t={28} $x={25}><Text $w={47}>Setting:</Text><Field $w={161}>1-0-0</Field></Row>
        <Row $t={28} $x={2}><Select w={111}>Gap Fill - None</Select><Select w={112} ml={9} dis>New Trend Bar With</Select></Row>
      </Group>
      <Group $w={240} $h={185} $mt={9} $ml={1}>
        <Legend>Session Times (HH:MM:SS):</Legend>
        <Row $t={30} $x={12}><Text $w={109}>Start Time:</Text><Field $w={103}>17:00:00</Field></Row>
        <Row $t={25} $x={12}><Text $w={109}>End Time:</Text><Field $w={103}>16:59:59</Field></Row>
        <Row $t={24} $x={13}><Opt>Use Evening Session</Opt></Row>
        <Row $t={23} $x={12}><Text $w={109}>Evening Start</Text><Field $w={103} $dis>21:00:00</Field></Row>
        <Row $t={25} $x={12}><Text $w={109}>Evening End Time:</Text><Field $w={103} $dis>21:00:00</Field></Row>
        <Row $t={25} $x={13}><Opt>New Bar At Session Start</Opt></Row>
        <Row $t={22} $x={12}><Select w={213}>Load All Weekend Data</Select></Row>
      </Group>
      <Row $t={22} $x={15}><Opt>Automatically Rollover Futures Symbol</Opt></Row>
      <Row $t={19} $x={15}><Opt>Save Days to Load, Intraday Bar Period, Graph Draw Type as Default</Opt></Row>
    </Column>
    <Column $w={195}>
      <Group $w={191} $h={116} $mt={13}>
        <Legend>Historical Chart Bar Period:</Legend>
        <Row $t={30} $x={17}><Rad on dis w={73}>Days:</Rad><Field $w={82} $dis>1</Field></Row>
        <Row $t={19} $x={17}><Rad dis>Weekly</Rad></Row>
        <Row $t={19} $x={17}><Rad dis>Monthly</Rad></Row>
        <Row $t={19} $x={17}><Rad dis>Quarterly</Rad></Row>
        <Row $t={19} $x={17}><Rad dis>Yearly</Rad></Row>
      </Group>
      <Row $t={27}><Text>Graph Draw Type:</Text></Row>
      <ListBox>
        <ListItems>
          <ListItem>OHLC Bars</ListItem>
          <ListItem $on>Candlestick Bars</ListItem>
          <ListItem>Candlestick Body Only</ListItem>
          <ListItem>Candlestick Bars Hollow</ListItem>
          <ListItem>Line on Close</ListItem>
          <ListItem>Mountain</ListItem>
        </ListItems>
        <ListScroll>
          <Chevron d="M1 5l3.5-3.5L8 5" />
          <ListThumb />
          <Chevron d="M1 1l3.5 3.5L8 1" />
        </ListScroll>
      </ListBox>
      <Btn $w={80} $mt={9}>Scale</Btn>
      <Btn $w={181} $mt={13} $ml={1}>Apply Global Symbol Settings</Btn>
      <Btn $w={181} $mt={6} $ml={1}>Edit Global Symbol Settings</Btn>
    </Column>
  </>
);

/* ---------- app ---------- */

export default function App() {
  return (
    <Shell>
      <GlobalStyle />
      <TitleBar>
        <Globe />
        <TitleText>Sierra Chart 2348 W2T Backtest  SC Data - All Services 2023-10-04  16:10:21 Wed [Sim]  DF:149779  ST:2, 2 - [6JZ23-CME [CV][M]  1 Day   #4 L:2 | Delayed | JAP]</TitleText>
        <WinBtn><svg width="10" height="1"><rect width="10" height="1" fill="#999" /></svg></WinBtn>
        <WinBtn><svg width="10" height="11" fill="none" stroke="#999"><path d="M0.5 2.5h7v8h-7zM2.5 2.5v-2h7v8h-2" /></svg></WinBtn>
        <WinBtn><svg width="11" height="11" stroke="#999"><path d="M0.5 0.5l10 10M10.5 0.5l-10 10" /></svg></WinBtn>
      </TitleBar>
      <MenuBar>
        <MenuIcon />
        {['File', 'Edit', 'Chart', 'Analysis', 'Tools', 'Spreadsheet', 'Trade', 'Global Settings', 'Window', 'CB', 'CW', 'Help'].map((m) => (
          <MenuItem key={m}>{m}</MenuItem>
        ))}
        <MdiButtons>
          <MdiBtn>_</MdiBtn>
          <MdiBtn>❐</MdiBtn>
          <MdiBtn>×</MdiBtn>
        </MdiButtons>
      </MenuBar>
      <ToolBar>
        <StatusBox>DF:149785  ST:2, 2  BR:4.75M</StatusBox>
        {TOOLBAR.map((g, i) => (
          <TbGroup key={i} $ml={g.ml}>
            {g.items.map(([label, w, state]) => (
              <TbBtn key={label + i} $w={w} $dis={state === 'dis'} $pressed={state === 'on'}>
                {/^i\d$/.test(label) ? <Bracket type={label} /> : label}
              </TbBtn>
            ))}
          </TbGroup>
        ))}
      </ToolBar>
      <TabRow><WindowTab>W2T Backtest</WindowTab></TabRow>
      <Workspace>
        <ChartSvg width="1920" height="878" viewBox="0 100 1920 878">
          <rect x="3" y="100" width="1917" height="878" fill="#222" />
          {DIVIDERS.map(([x]) => (
            <line key={x} x1={x + 0.5} x2={x + 0.5} y1="100" y2="978" stroke="#8a8a8a" strokeDasharray="5 4" />
          ))}
          {BARS.map((b, i) => (
            <g key={i}>
              <line x1={Math.round(b.x) + 0.5} x2={Math.round(b.x) + 0.5} y1={b.hi} y2={b.lo} stroke="#e4e4e4" />
              <rect x={Math.round(b.x) - 1} y={b.top} width="3" height={Math.max(b.bot - b.top, 1)} fill={b.col === 'g' ? '#00c800' : '#cc0000'} />
            </g>
          ))}
          <line x1="1870.5" x2="1870.5" y1="100" y2="978" stroke="#ddd" />
          {PRICES.map((p, i) => (
            <line key={p} x1="1870" x2="1873" y1={Math.round(PRICE_Y(i)) + 0.5} y2={Math.round(PRICE_Y(i)) + 0.5} stroke="#ddd" />
          ))}
        </ChartSvg>
        <TimeScale>
          <svg width="1870" height="1" style={{ display: 'block' }}><rect width="1870" height="1" fill="#ddd" /></svg>
          {TIME_LABELS.map(([l, r]) => (
            <TimeTick key={l} style={{ left: Math.round((l + r) / 2) }} />
          ))}
          {TIME_LABELS.map(([l, r, t]) => (
            <TimeLabel key={l} style={{ left: l, width: r - l }}>{t}</TimeLabel>
          ))}
          <TimeBadge>4 L</TimeBadge>
        </TimeScale>
        {PRICES.map((p, i) => (
          <PriceLabel
            key={p}
            $now={p === '0.68000'}
            style={{ top: Math.round(PRICE_Y(i)) - 108, marginLeft: -3 }}
          >
            {p === '0.68000' ? '0.68005' : p}
          </PriceLabel>
        ))}
        {DIVIDERS.map(([x, t]) => (
          <DateLabel key={x} style={{ left: x - 1 }}>{t}</DateLabel>
        ))}
        <ChartHeader>
          <HeaderRow>
            <Tag $bg="#0a7fc4" $fg="#fff">[Sim1]  Trade: 1@0.68640</Tag>
            <span> 6JZ23-CME [CV][M]  1 Day   #4 </span>
            <Tag $bg="#fff" $fg="#111">C: 0.6</Tag>
          </HeaderRow>
          <HeaderRow><Tag $bg="#0a7fc4" $fg="#fff">DPL: 0.00000P</Tag></HeaderRow>
        </ChartHeader>
        <Snip>Full-screen Snip</Snip>
        <DialogFrame left={332} width={767} active={1} tabPl={14} tabWidths={[85, 113, 119, 121, 41]} pageMl={12} pageW={742}>
          <AdvancedPage />
        </DialogFrame>
        <DialogFrame left={1099} width={768} active={0} tabPl={12} tabWidths={[89, 109, 120, 121, 41]} pageMl={11} pageW={743}>
          <MainPage />
        </DialogFrame>
      </Workspace>
      <ScrollBar>
        <Chevron d="M6 0.5L2 3l4 2.5" />
        <ScrollThumb />
        <Chevron d="M3 0.5L7 3 3 5.5" />
      </ScrollBar>
      <BottomTabs>
        <BottomTab $w={174}>6JZ23-CME [CV]  30 Min   #3 L:2</BottomTab>
        <BottomTab $w={175}>6JZ23-CME [CV]  60 Min   #1 L:2</BottomTab>
        <BottomTab $w={182}>6JZ23-CME [CV]  240 Min   #2 L:2</BottomTab>
        <BottomTab $w={167} $on>6JZ23-CME [CV]  1 Day   #4 L:2</BottomTab>
      </BottomTabs>
    </Shell>
  );
}
